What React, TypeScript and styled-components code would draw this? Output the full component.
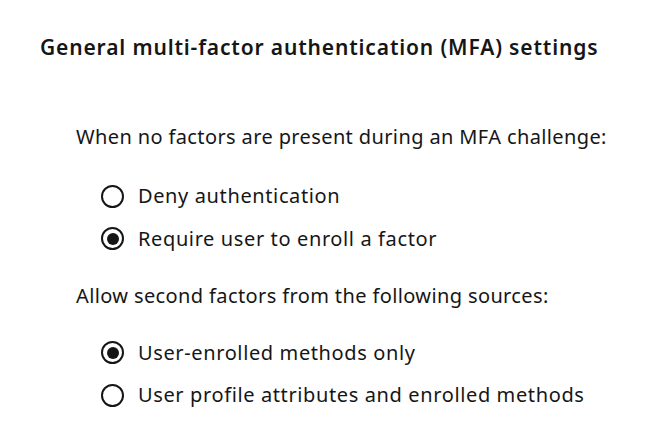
import React, { useState } from "react"
import styled, { createGlobalStyle } from "styled-components"

const GlobalStyle = createGlobalStyle`
    body {
        margin: 0;
        background: #ffffff;
        font-family: "Noto Sans", "Open Sans", sans-serif;
        color: #161616;
    }
`

type Option = { id: string, label: string }

type RadioGroupProps = {
    name: string,
    options: Option[],
    value: string,
    offset: number,
    onChange(id: string): void
}

const RadioGroup: React.FunctionComponent<RadioGroupProps> = ({ name, options, value, offset, onChange }) => (
    <Group $offset={offset}>
        {options.map(o => (
            <RadioRow key={o.id}>
                <HiddenInput
                    type="radio"
                    name={name}
                    checked={value === o.id}
                    onChange={() => onChange(o.id)}
                />
                <Circle $checked={value === o.id} />
                <RadioLabel>{o.label}</RadioLabel>
            </RadioRow>
        ))}
    </Group>
)

export default function App() {
    const [noFactor, setNoFactor] = useState("enroll")
    const [sources, setSources] = useState("enrolled")
    return (
        <Page>
            <GlobalStyle />
            <Heading>General multi-factor authentication (MFA) settings</Heading>
            <Section>
                <Question>When no factors are present during an MFA challenge:</Question>
                <RadioGroup
                    name="noFactor"
                    value={noFactor}
                    offset={31}
                    onChange={setNoFactor}
                    options={[
                        { id: "deny", label: "Deny authentication" },
                        { id: "enroll", label: "Require user to enroll a factor" }
                    ]}
                />
            </Section>
            <Section $second>
                <Question>Allow second factors from the following sources:</Question>
                <RadioGroup
                    name="sources"
                    value={sources}
                    offset={29}
                    onChange={setSources}
                    options={[
                        { id: "enrolled", label: "User-enrolled methods only" },
                        { id: "profile", label: "User profile attributes and enrolled methods" }
                    ]}
                />
            </Section>
        </Page>
    )
}

const Page = styled.div`
    display: flex;
    flex-direction: column;
    padding: 33px 0 0 40px;
`
const Heading = styled.h1`
    margin: 0 0 62px 0;
    font-size: 21px;
    font-weight: 600;
    line-height: 28px;
    letter-spacing: 0.85px;
`
const Section = styled.div<{ $second?: boolean }>`
    display: flex;
    flex-direction: column;
    padding-left: 36px;
    margin-top: ${({ $second }) => $second ? "29px" : "0"};
`
const Question = styled.p`
    margin: 0;
    font-size: 20px;
    line-height: 28px;
    letter-spacing: 0.38px;
`
const Group = styled.div<{ $offset: number }>`
    display: flex;
    flex-direction: column;
    gap: 14.5px;
    padding-left: 25px;
    margin-top: ${({ $offset }) => $offset}px;
`
const RadioRow = styled.label`
    display: flex;
    flex-direction: row;
    align-items: center;
    gap: 14px;
    height: 28px;
    cursor: pointer;
`
const HiddenInput = styled.input`
    position: absolute;
    opacity: 0;
    width: 0;
    height: 0;
    margin: 0;
`
const Circle = styled.span<{ $checked: boolean }>`
    position: relative;
    flex: none;
    box-sizing: border-box;
    width: 23px;
    height: 23px;
    border: 2px solid #161616;
    border-radius: 50%;
    &::after {
        content: "";
        display: ${({ $checked }) => $checked ? "block" : "none"};
        position: absolute;
        left: 50%;
        top: 50%;
        width: 12px;
        height: 12px;
        margin: -6px 0 0 -6px;
        border-radius: 50%;
        background: #161616;
    }
`
const RadioLabel = styled.span`
    font-size: 20px;
    line-height: 28px;
    letter-spacing: 0.62px;
`
